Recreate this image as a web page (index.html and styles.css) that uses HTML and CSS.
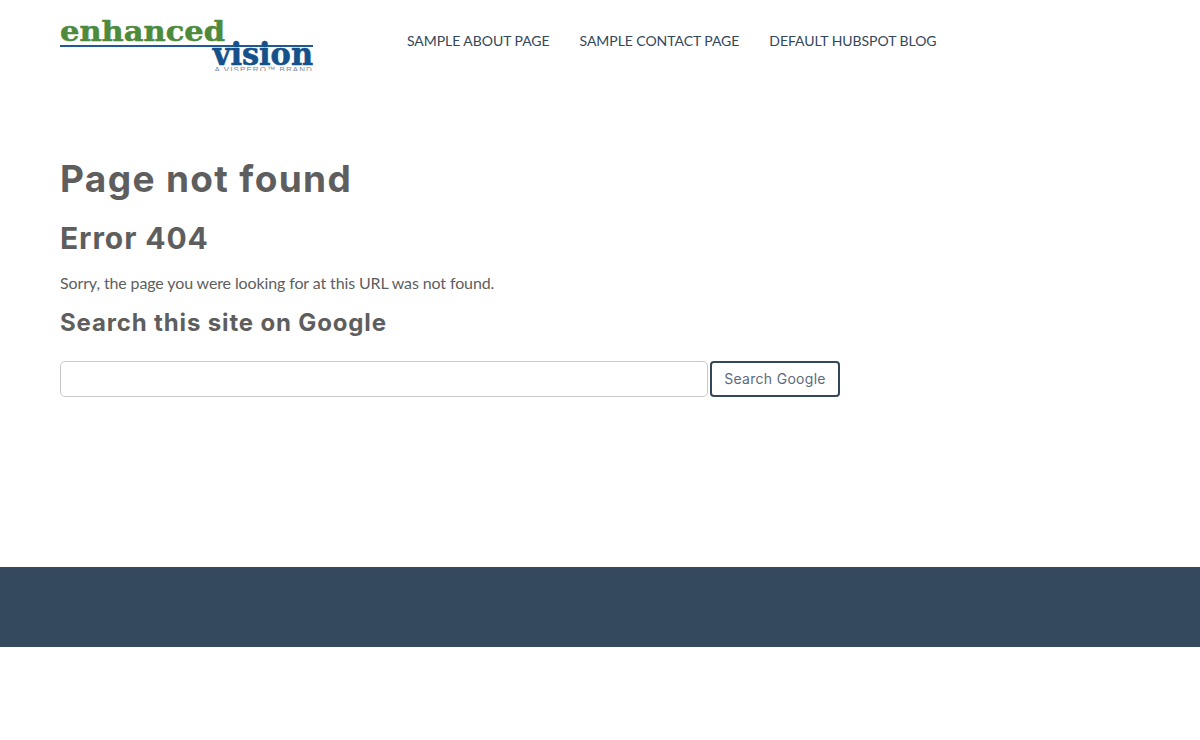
FILE: index.html
```html
<!DOCTYPE html>
<html lang="en">
<head>
<meta charset="utf-8">
<title>Page not found</title>
<link rel="stylesheet" href="styles.css">
</head>
<body>
<header class="header">
  <a class="logo" href="#">
    <span class="logo-top">enhanced</span>
    <span class="logo-rule"></span>
    <span class="logo-bottom">vision</span>
    <span class="logo-tag">A VISPERO™ BRAND</span>
  </a>
  <nav class="nav">
    <a href="#">SAMPLE ABOUT PAGE</a>
    <a href="#">SAMPLE CONTACT PAGE</a>
    <a href="#">DEFAULT HUBSPOT BLOG</a>
  </nav>
</header>
<main class="main">
  <h1>Page not found</h1>
  <h2>Error 404</h2>
  <p>Sorry, the page you were looking for at this URL was not found.</p>
  <h3>Search this site on Google</h3>
  <form class="search">
    <input class="search-input" type="text" aria-label="Search">
    <button class="search-btn" type="button">Search Google</button>
  </form>
</main>
<footer class="footer"></footer>
</body>
</html>
```
FILE: styles.css
```css
* { box-sizing: border-box; }
html, body { margin: 0; padding: 0; background: #fff; }
body { font-family: "Lato", sans-serif; color: #5e5e5e; height: 740px; overflow: hidden; }

.header { display: flex; align-items: flex-start; height: 82px; padding: 20px 60px 0; }
.logo { display: flex; flex-direction: column; width: 253px; height: 51px; text-decoration: none; }
.logo-top { display: block; font: 700 27px/24px "DejaVu Serif", serif; color: #4d8a3b; height: 24px; -webkit-text-stroke: 0.5px #4d8a3b; transform: scaleX(1.13); transform-origin: left center; width: 150px; white-space: nowrap; }
.logo-rule { display: block; height: 2px; margin-top: 1px; background: #1f5a94; }
.logo-bottom { display: block; font: 700 32px/20px "DejaVu Serif", serif; color: #14508a; text-align: right; height: 20px; margin-top: -3px; -webkit-text-stroke: 0.6px #14508a; transform: scaleX(0.95); transform-origin: right center; }
.logo-tag { display: block; font: 400 8px/9px "Liberation Sans", sans-serif; color: #7c8a96; text-align: right; letter-spacing: 1.1px; height: 6px; margin-top: 1px; overflow: hidden; white-space: nowrap; }

.nav { display: flex; gap: 30px; margin-left: 94px; padding-top: 12px; }
.nav a { font: 400 14px/17px "Lato", sans-serif; color: #33475b; text-decoration: none; letter-spacing: -0.05px; }

.main { height: 485px; padding: 0 60px; }
h1, h2, h3 { margin: 0; font-family: "Inter", sans-serif; font-weight: 700; color: #5e5e5e; }
h1 { font-size: 37px; line-height: 44px; padding-top: 75px; height: 119px; letter-spacing: 1.35px; }
h2 { font-size: 30px; line-height: 36px; margin-top: 19px; letter-spacing: 0.9px; }
p { margin: 17px 0 0; font-size: 16px; line-height: 20px; letter-spacing: -0.12px; }
h3 { font-size: 24px; line-height: 30px; margin-top: 15px; letter-spacing: 0.85px; }

.search { display: flex; align-items: center; gap: 2px; margin-top: 23px; width: 780px; }
.search-input { width: 648px; height: 36px; border: 1px solid #c8c8c8; border-radius: 5px; background: #fff; }
.search-btn { width: 130px; height: 36px; border: 2px solid #33475b; border-radius: 4px; background: #fff; color: #5c6b7a; font: 400 14px/1 "Inter", sans-serif; letter-spacing: 0.3px; padding: 0; }

.footer { height: 80px; background: #34495e; }
```
